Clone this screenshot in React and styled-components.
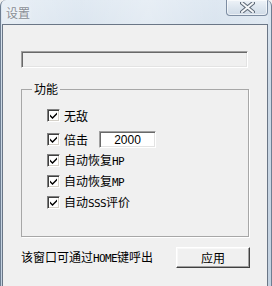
import React from 'react'
import styled, { createGlobalStyle } from 'styled-components'

const Global = createGlobalStyle`
  html, body { margin: 0; padding: 0; background: #f0f0f0; }
  body { font-family: "Noto Sans CJK SC", "Noto Sans", sans-serif; font-size: 12px; color: #000; }
`

const Window = styled.div`
  width: 272px;
  height: 286px;
  display: flex;
  flex-direction: column;
  box-sizing: border-box;
  background: linear-gradient(180deg, #dde7f1 0%, #ccd9e6 30%, #c3d1e0 100%);
  border-left: 1px solid #6e7e92;
  border-right: 1px solid #6e7e92;
  border-top-left-radius: 6px;
  border-top-right-radius: 6px;
  padding: 0 3px 0 1px;
  overflow: hidden;
`

const TitleBar = styled.div`
  height: 24px;
  display: flex;
  align-items: flex-start;
  justify-content: space-between;
  background: linear-gradient(90deg, rgba(255,255,255,0.35) 0%, rgba(255,255,255,0.1) 30%, rgba(255,255,255,0.3) 55%, rgba(255,255,255,0.05) 80%, rgba(255,255,255,0.2) 100%);
`

const Title = styled.div`
  padding: 7px 0 0 4px;
  color: #8a8f96;
  font-size: 12px;
  line-height: 12px;
  text-shadow: 0 0 4px #fff;
`

const CloseButton = styled.div`
  width: 42px;
  height: 16px;
  box-sizing: border-box;
  border: 1px solid #7d8da2;
  border-top: none;
  border-radius: 0 0 4px 4px;
  background: linear-gradient(180deg, #eef3f8 0%, #dde6ef 50%, #cfdae6 100%);
  display: flex;
  align-items: center;
  justify-content: center;
  box-shadow: inset 0 0 0 1px rgba(255,255,255,0.6);
`

const Client = styled.div`
  flex: 1;
  background: #f0f0f0;
  border: 1px solid #6a7686;
  border-bottom: none;
  padding: 0 19px 0 18px;
  display: flex;
  flex-direction: column;
`

const StatusField = styled.div`
  margin-top: 26px;
  height: 17px;
  box-sizing: border-box;
  border-style: solid;
  border-width: 1px;
  border-color: #a0a0a0 #fff #fff #a0a0a0;
  box-shadow: inset 1px 1px 0 #696969, inset -1px -1px 0 #e3e3e3;
  background: #f0f0f0;
`

const Group = styled.fieldset`
  margin: 14px -1px 0 0;
  padding: 0 0 23px 25px;
  border: 1px solid #a7a7a7;
  box-shadow: 1px 1px 0 #fff;
  min-width: 0;
`

const Legend = styled.legend`
  margin-left: -15px;
  padding: 0 2px;
  line-height: 14px;
  font-size: 12px;
`

const List = styled.div`
  display: flex;
  flex-direction: column;
  padding-top: 9px;
`

const Row = styled.label`
  height: 21px;
  display: flex;
  align-items: center;
  gap: 4px;
  margin-bottom: ${p => (p.$spaced ? '3px' : '0')};
`

const Box = styled.span`
  width: 13px;
  height: 13px;
  box-sizing: border-box;
  border-style: solid;
  border-width: 1px;
  border-color: #808080 #fff #fff #808080;
  box-shadow: inset 1px 1px 0 #404040, inset -1px -1px 0 #d4d0c8;
  background: #fff;
  display: flex;
  align-items: center;
  justify-content: center;
`

const Label = styled.span`
  line-height: 14px;
  white-space: nowrap;
`

const Latin = styled.span`
  font-family: "DejaVu Sans Mono", "Liberation Mono", monospace;
  font-size: 11px;
  letter-spacing: -0.6px;
`

const NumberField = styled.div`
  margin-left: 7px;
  width: 57px;
  height: 17px;
  box-sizing: border-box;
  border-style: solid;
  border-width: 1px;
  border-color: #a0a0a0 #fff #fff #a0a0a0;
  box-shadow: inset 1px 1px 0 #696969, inset -1px -1px 0 #e3e3e3;
  background: #fff;
  display: flex;
  align-items: center;
  justify-content: center;
  font-family: "Liberation Sans", Arial, sans-serif;
  font-size: 12px;
`

const Footer = styled.div`
  margin-top: 10px;
  height: 21px;
  display: flex;
  align-items: center;
`

const Hint = styled.span`
  line-height: 14px;
  padding-top: 1px;
  white-space: nowrap;
`

const Button = styled.div`
  margin: 0 -2px 0 auto;
  width: 74px;
  height: 21px;
  box-sizing: border-box;
  border-style: solid;
  border-width: 1px;
  border-color: #fff #404040 #404040 #fff;
  box-shadow: inset -1px -1px 0 #a0a0a0, inset 1px 1px 0 #f8f8f8;
  background: #f0f0f0;
  display: flex;
  align-items: center;
  justify-content: center;
`

const Check = () => (
  <svg width="9" height="9" viewBox="0 0 9 9">
    <path d="M1 3.5 L3.5 6 L8 1.5 L8 3.5 L3.5 8 L1 5.5 Z" fill="#000" />
  </svg>
)

const CloseIcon = () => (
  <svg width="15" height="11" viewBox="0 0 15 11">
    <path d="M2 1 L13 10 M13 1 L2 10" stroke="#5e6a78" strokeWidth="4" strokeLinecap="round" />
    <path d="M2 1 L13 10 M13 1 L2 10" stroke="#f4f6f8" strokeWidth="2" strokeLinecap="round" />
  </svg>
)

const Option = ({ children, spaced, extra }) => (
  <Row $spaced={spaced}>
    <Box><Check /></Box>
    <Label>{children}</Label>
    {extra}
  </Row>
)

const App = () => {
  return (
    <>
      <Global />
      <Window>
        <TitleBar>
          <Title>设置</Title>
          <CloseButton><CloseIcon /></CloseButton>
        </TitleBar>
        <Client>
          <StatusField />
          <Group>
            <Legend>功能</Legend>
            <List>
              <Option spaced>无敌</Option>
              <Option extra={<NumberField>2000</NumberField>}>倍击</Option>
              <Option>自动恢复<Latin>HP</Latin></Option>
              <Option>自动恢复<Latin>MP</Latin></Option>
              <Option>自动<Latin>SSS</Latin>评价</Option>
            </List>
          </Group>
          <Footer>
            <Hint>该窗口可通过<Latin>HOME</Latin>键呼出</Hint>
            <Button>应用</Button>
          </Footer>
        </Client>
      </Window>
    </>
  )
}

export default App
